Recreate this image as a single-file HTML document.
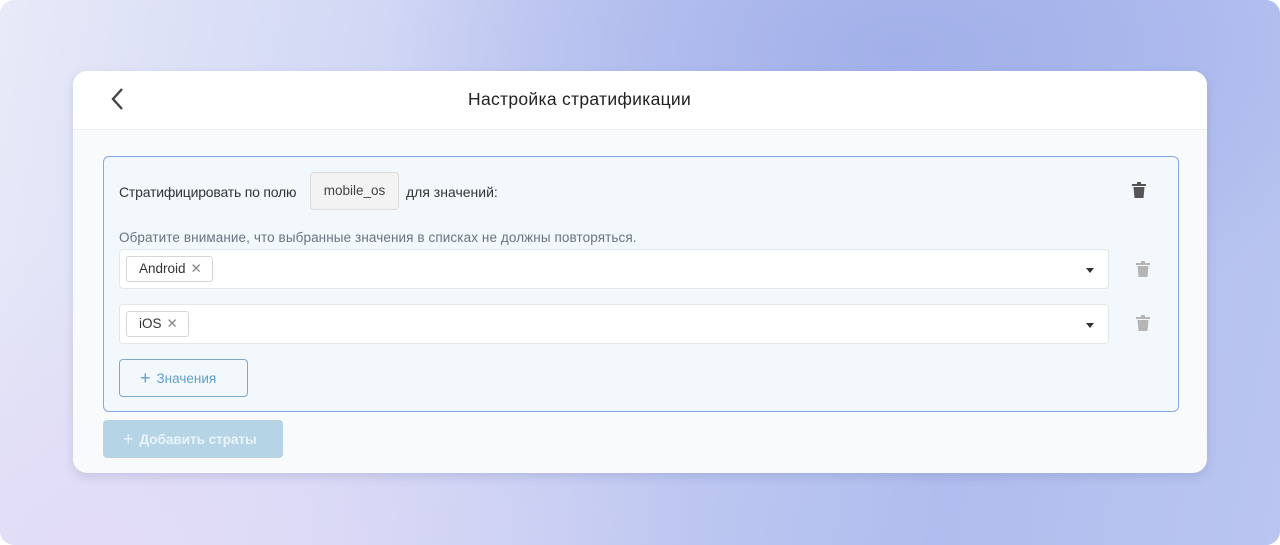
<!DOCTYPE html>
<html><head><meta charset="utf-8"><style>
*{box-sizing:border-box;margin:0;padding:0}
body{width:1280px;height:545px;background:#fff;font-family:"Liberation Sans","Noto Sans CJK SC",sans-serif;overflow:hidden;position:relative}
.bg{position:absolute;left:0;top:0;width:1280px;height:545px;border-radius:14px;
background:radial-gradient(ellipse 520px 280px at 900px 50px,#a2b0ea 0%,rgba(162,176,234,0) 100%),radial-gradient(ellipse 600px 300px at 100px 545px,#e2dcf7 0%,rgba(226,220,247,0) 100%),linear-gradient(100deg,#e8eaf8 0%,#c8cff3 40%,#b0bdee 75%,#bac5f0 100%);}
.card{position:absolute;left:73px;top:71px;width:1134px;height:402px;background:#f9fafb;border-radius:14px;box-shadow:0 4px 10px rgba(80,90,140,.18);overflow:hidden}
.hdr{height:59px;background:#fff;border-bottom:1px solid #eceef1;position:relative}
.hdr .t{position:absolute;left:395px;top:18px;font-size:17.5px;color:#222;letter-spacing:.3px}
.box{position:absolute;left:30px;top:85px;width:1076px;height:256px;background:#f3f8fd;border:1px solid #86a8e2;border-radius:6px}
.lbl{position:absolute;left:15px;top:27px;font-size:14px;color:#333;letter-spacing:-.2px}
.fld{position:absolute;left:206px;top:15px;width:89px;height:38px;background:#f3f3f4;border:1px solid #dcdcdc;border-radius:4px;font-size:13.5px;color:#444;text-align:center;line-height:36px}
.lbl2{position:absolute;left:302px;top:27px;font-size:14px;color:#333}
.note{position:absolute;left:15px;top:73px;font-size:13.5px;color:#6b7280;letter-spacing:.1px}
.sel{position:absolute;left:15px;width:990px;height:40px;background:#fff;border:1px solid #e3e6ea;border-radius:4px}
.tag{position:absolute;left:6px;top:6px;height:26px;border:1px solid #d6d6d6;border-radius:3px;background:#fff;font-size:13.5px;color:#333;padding:0 10px 0 12px;line-height:24px}
.tag span{color:#888;margin-left:5px}
.arr{position:absolute;right:14px;top:18px;width:0;height:0;border-left:4px solid transparent;border-right:4px solid transparent;border-top:5px solid #333}
.btn{position:absolute;left:15px;top:202px;width:129px;height:38px;border:1px solid #7aa9cf;border-radius:4px;color:#5f9fc8;font-size:13.5px;line-height:36px;padding-left:20px}
.add{position:absolute;left:30px;top:349px;width:180px;height:38px;background:#b5d5e6;border-radius:4px;color:#eaf4fa;font-size:13.5px;font-weight:bold;line-height:38px;padding-left:20px}
.trash{position:absolute}
</style></head><body>
<div class="bg"></div>
<div class="card">
 <div class="hdr">
  <svg style="position:absolute;left:37px;top:16px" width="16" height="24" viewBox="0 0 16 24"><path d="M12 2 L3 12 L12 22" fill="none" stroke="#444" stroke-width="2.4"/></svg>
  <div class="t">Настройка стратификации</div>
 </div>
 <div class="box">
  <div class="lbl">Стратифицировать по полю</div>
  <div class="fld">mobile_os</div>
  <div class="lbl2">для значений:</div>
  <svg class="trash" style="left:1028px;top:25px" width="14" height="16" viewBox="0 0 14 16"><rect x="0" y="2" width="14" height="2" fill="#555"/><rect x="5" y="0" width="4" height="2" fill="#555"/><path d="M1.5 5 H12.5 L11.5 16 H2.5 Z" fill="#555"/></svg>
  <div class="note">Обратите внимание, что выбранные значения в списках не должны повторяться.</div>
  <div class="sel" style="top:92px"><div class="tag">Android<span>✕</span></div><div class="arr"></div></div>
  <svg class="trash" style="left:1032px;top:104px" width="14" height="16" viewBox="0 0 14 16"><rect x="0" y="2" width="14" height="2" fill="#b5b5b5"/><rect x="5" y="0" width="4" height="2" fill="#b5b5b5"/><path d="M1.5 5 H12.5 L11.5 16 H2.5 Z" fill="#b5b5b5"/></svg>
  <div class="sel" style="top:147px"><div class="tag">iOS<span>✕</span></div><div class="arr"></div></div>
  <svg class="trash" style="left:1032px;top:158px" width="14" height="16" viewBox="0 0 14 16"><rect x="0" y="2" width="14" height="2" fill="#b5b5b5"/><rect x="5" y="0" width="4" height="2" fill="#b5b5b5"/><path d="M1.5 5 H12.5 L11.5 16 H2.5 Z" fill="#b5b5b5"/></svg>
  <div class="btn"><span style="font-size:18px;margin-right:6px;vertical-align:-1px">+</span>Значения</div>
 </div>
 <div class="add"><span style="font-size:18px;margin-right:6px;vertical-align:-1px;font-weight:normal">+</span>Добавить страты</div>
</div>
</body></html>
